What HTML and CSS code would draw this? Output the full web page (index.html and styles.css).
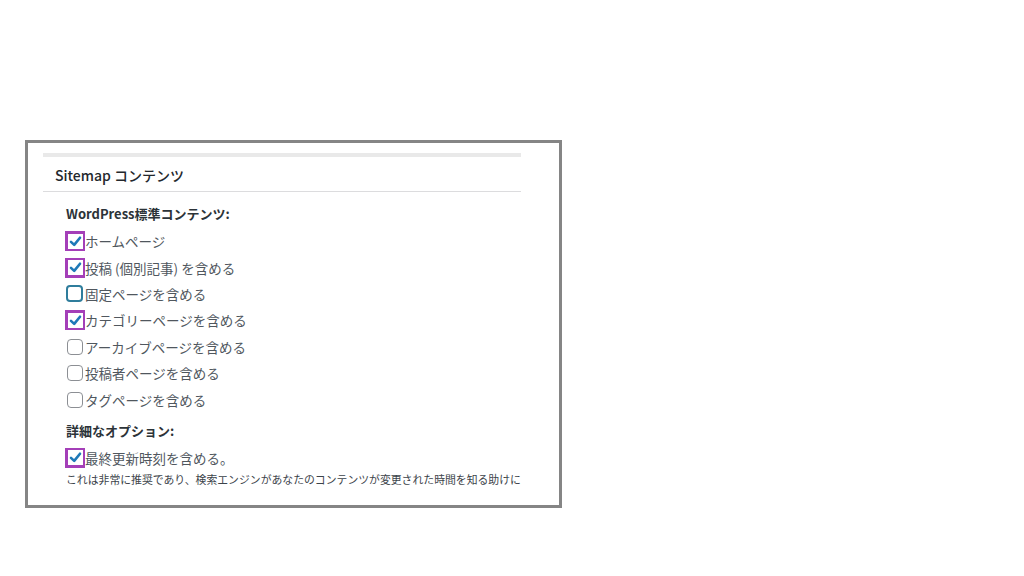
FILE: index.html
```html
<!DOCTYPE html>
<html lang="ja">
<head>
<meta charset="utf-8">
<link rel="stylesheet" href="styles.css">
</head>
<body>
<div class="frame">
  <div class="panel">
    <div class="topbar"></div>
    <h2 class="title">Sitemap コンテンツ</h2>
    <div class="content">
      <div class="group">WordPress標準コンテンツ:</div>
      <div class="row"><span class="cb hl"><span class="box"><svg viewBox="0 0 16 16"><path d="M3.2 8.4 L6.6 11.6 L12.8 4" /></svg></span></span><span class="lbl">ホームページ</span></div>
      <div class="row"><span class="cb hl"><span class="box"><svg viewBox="0 0 16 16"><path d="M3.2 8.4 L6.6 11.6 L12.8 4" /></svg></span></span><span class="lbl">投稿 (個別記事) を含める</span></div>
      <div class="row"><span class="cb focus"></span><span class="lbl">固定ページを含める</span></div>
      <div class="row"><span class="cb hl"><span class="box"><svg viewBox="0 0 16 16"><path d="M3.2 8.4 L6.6 11.6 L12.8 4" /></svg></span></span><span class="lbl">カテゴリーページを含める</span></div>
      <div class="row"><span class="cb plain"></span><span class="lbl">アーカイブページを含める</span></div>
      <div class="row"><span class="cb plain"></span><span class="lbl">投稿者ページを含める</span></div>
      <div class="row"><span class="cb plain"></span><span class="lbl">タグページを含める</span></div>
      <div class="group group2">詳細なオプション:</div>
      <div class="row"><span class="cb hl"><span class="box"><svg viewBox="0 0 16 16"><path d="M3.2 8.4 L6.6 11.6 L12.8 4" /></svg></span></span><span class="lbl">最終更新時刻を含める。</span></div>
      <div class="note">これは非常に推奨であり、検索エンジンがあなたのコンテンツが変更された時間を知る助けに</div>
    </div>
  </div>
</div>
</body>
</html>
```
FILE: styles.css
```css
html, body {
  margin: 0;
  padding: 0;
  background: #ffffff;
}
body {
  font-family: "Noto Sans CJK JP", "Noto Sans", sans-serif;
  color: #3c434a;
}
.frame {
  margin: 140px 0 0 25px;
  width: 531px;
  height: 362px;
  border: 3px solid #858585;
  box-sizing: content-box;
  overflow: hidden;
}
.panel {
  margin: 10px 0 0 15px;
  width: 478px;
}
.topbar {
  height: 4px;
  background: #e9e9e9;
}
.title {
  margin: 0;
  height: 34px;
  line-height: 36px;
  padding-left: 12px;
  font-size: 14px;
  font-weight: 500;
  color: #23282d;
  border-bottom: 1px solid #dcdcde;
}
.content {
  padding: 11px 0 0 23px;
  display: flex;
  flex-direction: column;
}
.group {
  font-size: 13px;
  font-weight: 600;
  line-height: 22px;
  height: 22px;
  color: #2c3338;
  margin-bottom: 3px;
}
.group2 {
  margin-top: 7px;
  margin-bottom: 3px;
}
.row {
  display: flex;
  align-items: center;
  height: 26.4px;
}
.cb {
  box-sizing: border-box;
  flex: none;
  display: flex;
  align-items: center;
  justify-content: center;
}
.cb.hl {
  width: 20px;
  height: 20px;
  margin-left: -1px;
  border: 2.5px solid #a43fb8;
  background: #a43fb8;
}
.cb.hl .box {
  width: 15px;
  height: 15px;
  background: #ffffff;
  display: flex;
}
.cb.hl svg {
  width: 15px;
  height: 15px;
}
.cb.hl path {
  fill: none;
  stroke: #1e79b8;
  stroke-width: 2.8;
  stroke-linecap: round;
  stroke-linejoin: round;
}
.cb.plain {
  width: 16px;
  height: 16px;
  margin-left: 1px;
  margin-right: 2px;
  border: 1px solid #8c8f94;
  border-radius: 4px;
  background: #fff;
}
.cb.focus {
  width: 17px;
  height: 17px;
  margin-left: 0;
  margin-right: 2px;
  border: 2px solid #2f7d9c;
  border-radius: 4px;
  background: #fff;
}
.lbl {
  font-size: 13.5px;
  color: #50575e;
  line-height: 20px;
  white-space: nowrap;
}
.note {
  font-size: 10.85px;
  color: #3c434a;
  line-height: 16px;
  margin-top: 0;
  white-space: nowrap;
}
```
